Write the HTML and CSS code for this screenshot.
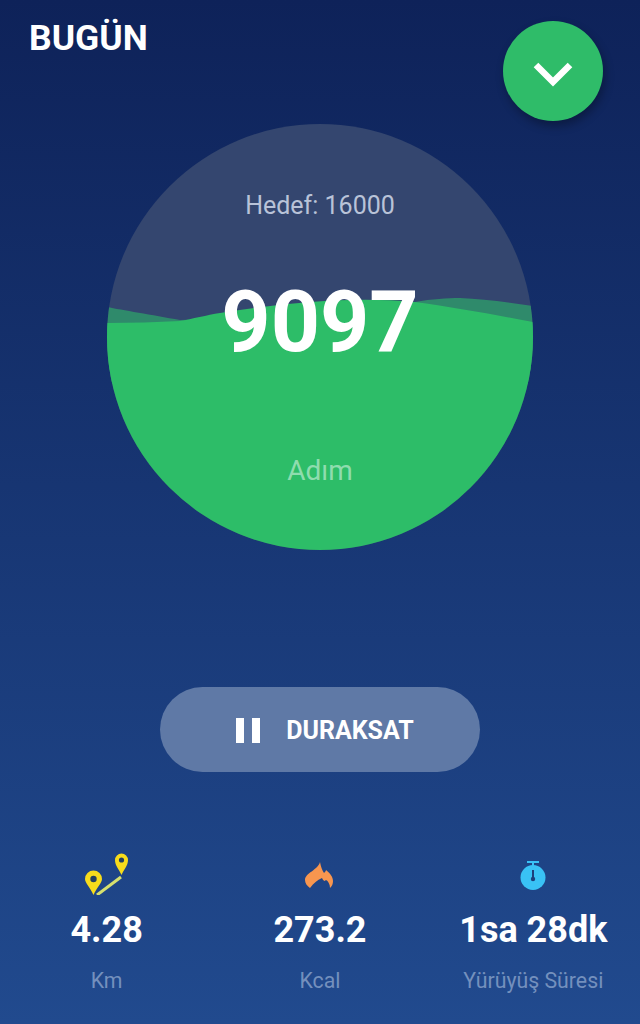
FILE: index.html
```html
<!DOCTYPE html>
<html lang="tr">
<head>
<meta charset="utf-8">
<title>Bugün</title>
<link rel="stylesheet" href="styles.css">
</head>
<body>
<main class="screen">
  <header class="top">
    <h1 class="title">BUGÜN</h1>
    <button class="fab" aria-label="Aç">
      <svg class="fab-icon" width="40" height="40" viewBox="0 0 40 40"><path d="M3 14 L20 31 L37 14" fill="none" stroke="#fff" stroke-width="6.5"/></svg>
    </button>
  </header>

  <section class="dial">
    <svg class="wave" viewBox="0 0 426 426" aria-hidden="true">
      <path class="wave-back" d="M0 183 C15 186 45 191 73 196 C140 196 210 180 308 178 C325 175 340 174 353 174 C375 175 400 178 426 182 V260 H0 Z"/>
      <path class="wave-front" d="M0 199 C25 199 50 198 73 197 C85 195 100 191 113 189 C180 178 250 172 308 178 C345 183 390 191 426 198 V426 H0 Z"/>
    </svg>
    <div class="goal">Hedef: 16000</div>
    <div class="count">9097</div>
    <div class="unit">Adım</div>
  </section>

  <button class="pause">
    <span class="pause-icon"><i></i><i></i></span>
    <span>DURAKSAT</span>
  </button>

  <section class="stats">
    <div class="stat">
      <svg class="stat-icon" width="50" height="50" viewBox="0 0 50 50">
        <path d="M15 50 L39 32" stroke="#d6e06e" stroke-width="3" fill="none"/>
        <path d="M11.5 50 C8 42 3 38 3 34 A8.5 8.5 0 0 1 20 34 C20 38 15 42 11.5 50 Z" fill="#f7dc1c"/>
        <circle cx="11.5" cy="34" r="3.2" fill="#24405f"/>
        <path d="M39.5 30 C37 24 33 21 33 15 A6.5 6.5 0 0 1 46 15 C46 21 42 24 39.5 30 Z" fill="#f7dc1c"/>
        <circle cx="39.5" cy="15" r="2.6" fill="#24405f"/>
      </svg>
      <div class="value">4.28</div>
      <div class="label">Km</div>
    </div>
    <div class="stat">
      <svg class="stat-icon" width="50" height="50" viewBox="0 0 50 50">
        <path d="M25 17 C26 22 27 25 29 28 C30 27 31 26 31 25 C35 28 38 32 38 36 C38 39 37 41 35 43 C35 39 33 36 31 35 C30 36 29 37 27 33 C22 35 19 38 15 43 C12 41 10 38 10 35 C10 28 23 25 25 17 Z" fill="#f8964f"/>
      </svg>
      <div class="value">273.2</div>
      <div class="label">Kcal</div>
    </div>
    <div class="stat">
      <svg class="stat-icon" width="50" height="50" viewBox="0 0 50 50">
        <path d="M19 17 H31 M25 17 V22" stroke="#39c2f5" stroke-width="2" fill="none"/>
        <circle cx="25" cy="32.5" r="12.5" fill="#39c2f5"/>
        <path d="M25 25 V33" stroke="#1d3f7c" stroke-width="2"/>
        <circle cx="25" cy="34" r="2.2" fill="#1d3f7c"/>
      </svg>
      <div class="value">1sa 28dk</div>
      <div class="label">Yürüyüş Süresi</div>
    </div>
  </section>
</main>
</body>
</html>
```

FILE: styles.css
```css
* { box-sizing: border-box; }
html, body { margin: 0; height: 100%; }
body { font-family: Roboto, "Noto Sans", sans-serif; }
.screen {
  width: 640px;
  height: 1024px;
  overflow: hidden;
  background: linear-gradient(180deg, #0e2259 0%, #214a8e 100%);
  color: #fff;
  display: flex;
  flex-direction: column;
  align-items: center;
}
.top {
  width: 100%;
  height: 124px;
  padding: 21px 37px 0 29px;
  display: flex;
  justify-content: space-between;
  align-items: flex-start;
}
.title { margin: 0; font-size: 35.5px; line-height: 34px; font-weight: 700; }
.fab {
  width: 100px;
  height: 100px;
  border: 0;
  padding: 0;
  border-radius: 50%;
  background: #2fbc69;
  box-shadow: 2px 5px 10px rgba(0, 0, 0, .3);
  display: flex;
  align-items: center;
  justify-content: center;
}
.fab-icon { display: block; width: 40px; height: 40px; }
.dial {
  position: relative;
  width: 426px;
  height: 426px;
  border-radius: 50%;
  overflow: hidden;
  background: #34466f;
  display: flex;
  flex-direction: column;
  align-items: center;
}
.wave { position: absolute; inset: 0; width: 100%; height: 100%; }
.wave-back { fill: #2f8a6b; }
.wave-front { fill: #2dbd68; }
.goal, .count, .unit { position: relative; }
.goal { margin-top: 67px; font-size: 25px; line-height: 30px; color: #b9c3d8; }
.count { margin-top: 56px; font-size: 86px; line-height: 90px; font-weight: 700; }
.unit { margin-top: 89px; font-size: 28px; line-height: 30px; color: #8fdcae; }
.pause {
  margin-top: 137px;
  width: 320px;
  height: 85px;
  border: 0;
  border-radius: 43px;
  background: #5f79a6;
  color: #fff;
  font: 700 25px Roboto, sans-serif;
  display: flex;
  align-items: center;
  justify-content: center;
  gap: 26px;
  padding: 2px 0 0 10px;
}
.pause-icon { display: flex; gap: 8px; }
.pause-icon i { display: block; width: 8px; height: 25px; background: #fff; }
.stats {
  margin-top: 73px;
  width: 100%;
  display: grid;
  grid-template-columns: repeat(3, 1fr);
}
.stat { display: flex; flex-direction: column; align-items: center; }
.stat-icon { display: block; }
.value { margin-top: 15px; font-size: 36px; line-height: 40px; font-weight: 700; }
.label { margin-top: 18px; font-size: 21.3px; line-height: 26px; color: #7490bd; }
```
